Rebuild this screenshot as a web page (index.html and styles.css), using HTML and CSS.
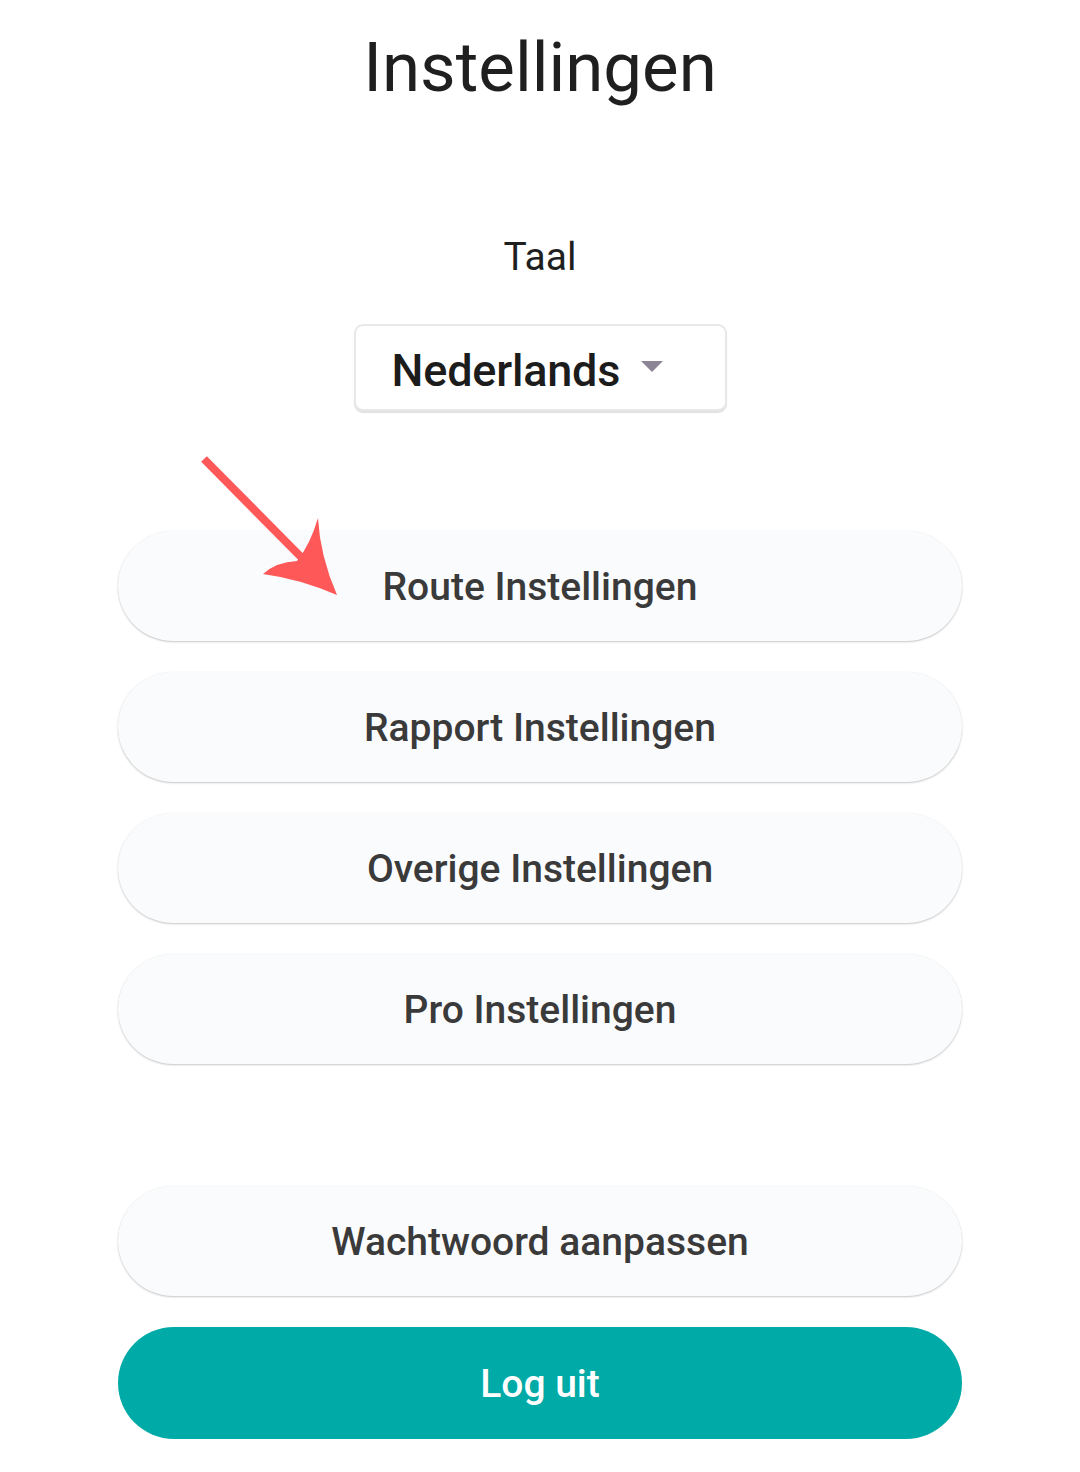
FILE: index.html
```html
<!DOCTYPE html>
<html lang="nl">
<head>
<meta charset="utf-8">
<title>Instellingen</title>
<link rel="stylesheet" href="styles.css">
</head>
<body>
<div class="page">
  <h1 class="title">Instellingen</h1>
  <div class="label">Taal</div>
  <div class="select">
    <span class="select-text">Nederlands</span>
    <span class="caret"></span>
  </div>
  <div class="menu">
    <button class="btn">Route Instellingen</button>
    <button class="btn">Rapport Instellingen</button>
    <button class="btn">Overige Instellingen</button>
    <button class="btn">Pro Instellingen</button>
  </div>
  <div class="account">
    <button class="btn">Wachtwoord aanpassen</button>
    <button class="btn btn-primary">Log uit</button>
  </div>
  <svg class="arrow" width="1080" height="700" viewBox="0 0 1080 700" aria-hidden="true">
    <line x1="204" y1="459" x2="302" y2="558" stroke="#ff5858" stroke-width="8" stroke-linecap="butt"/>
    <path d="M318 518 Q320 556 337 595 Q300 579 263 574 Q276 562 297 561 Q310 545 318 518 Z" fill="#ff5858"/>
  </svg>
</div>
</body>
</html>
```

FILE: styles.css
```css
html, body {
  margin: 0;
  padding: 0;
  background: #ffffff;
}

.page {
  position: relative;
  width: 1080px;
  min-height: 1472px;
  font-family: Roboto, "Noto Sans", Arial, sans-serif;
  display: flex;
  flex-direction: column;
  align-items: center;
}

.title {
  margin: 28px 0 0;
  font-size: 69px;
  line-height: 80px;
  font-weight: 400;
  color: #1f1f1f;
}

.label {
  margin-top: 125px;
  font-size: 39px;
  line-height: 48px;
  color: #1f1f1f;
}

.select {
  box-sizing: border-box;
  margin-top: 43px;
  width: 373px;
  height: 87px;
  padding: 6px 0 0 36px;
  border: 2px solid #e8e8e8;
  border-radius: 9px;
  box-shadow: 0 2px 1px rgba(0, 0, 0, 0.12);
  background: #ffffff;
  display: flex;
  align-items: center;
}

.select-text {
  font-size: 45px;
  line-height: 56px;
  font-weight: 500;
  color: #1c1c1c;
  letter-spacing: -0.2px;
}

.caret {
  margin-left: 21px;
  margin-top: -8px;
  width: 0;
  height: 0;
  border-left: 11px solid transparent;
  border-right: 11px solid transparent;
  border-top: 11px solid #8b8595;
}

.menu,
.account {
  display: flex;
  flex-direction: column;
  gap: 31px;
  width: 844px;
}

.menu {
  margin-top: 120px;
}

.account {
  margin-top: 122px;
}

.btn {
  box-sizing: border-box;
  width: 844px;
  height: 110px;
  border: none;
  border-radius: 55px;
  background: #fafbfd;
  box-shadow: 0 1px 2px rgba(0, 0, 0, 0.22), 0 0 1px rgba(0, 0, 0, 0.06);
  font-family: Roboto, "Noto Sans", Arial, sans-serif;
  font-size: 39px;
  line-height: 48px;
  font-weight: 500;
  color: #3a3a3a;
  padding: 2px 0 0;
}

.btn-primary {
  height: 112px;
  border-radius: 56px;
  background: #00aaa6;
  color: #ffffff;
  box-shadow: none;
}

.arrow {
  position: absolute;
  left: 0;
  top: 0;
  pointer-events: none;
}
```
